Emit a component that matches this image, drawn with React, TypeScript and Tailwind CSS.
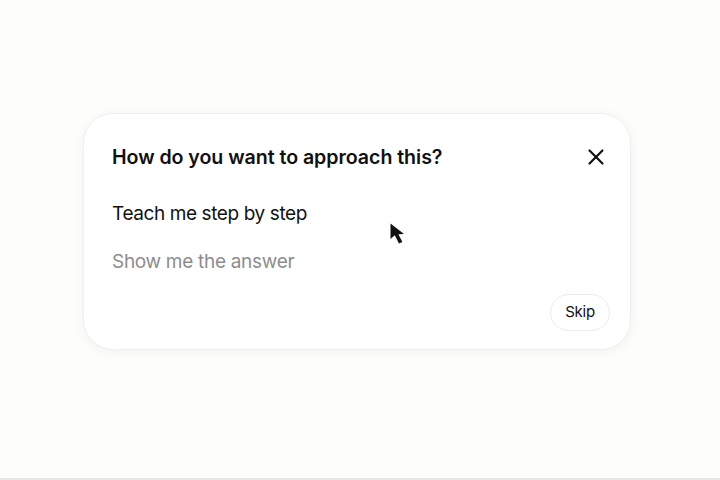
import React from "react";
import { X } from "lucide-react";

export default function App() {
  return (
    <div
      className="relative w-[720px] h-[480px] bg-[#fdfdfc] overflow-hidden border-b-2 border-[#e6e6e4]"
      style={{ fontFamily: "Inter, 'Liberation Sans', sans-serif" }}
    >
      <div className="pt-[113px] pl-[83px]">
        {/* Card */}
        <div className="w-[548px] h-[237px] bg-white rounded-[30px] border border-[#efefed] shadow-[0_2px_12px_rgba(0,0,0,0.05)] flex flex-col">
          <div className="flex items-center justify-between pl-[28px] pr-[21px] pt-[30px]">
            <h2 className="text-[19.6px] font-semibold text-[#111] tracking-[-0.05px] leading-[24px]">
              How do you want to approach this?
            </h2>
            <X className="w-[26px] h-[26px] text-[#111]" strokeWidth={2} />
          </div>

          <div className="flex flex-col pl-[28px] mt-[32px] gap-[24px]">
            <div className="text-[19px] text-[#111] leading-[24px] tracking-[-0.4px]">Teach me step by step</div>
            <div className="text-[19px] text-[#8d8d8d] leading-[24px] tracking-[-0.3px]">Show me the answer</div>
          </div>

          <div className="flex justify-end mt-auto pr-[20px] pb-[18px]">
            <button className="h-[37px] px-[14px] rounded-full border border-[#ececea] bg-white text-[15px] text-[#111] tracking-[-0.2px]">
              Skip
            </button>
          </div>
        </div>
      </div>

      {/* Mouse cursor */}
      <svg
        className="absolute left-[389px] top-[222px]"
        width="20"
        height="24"
        viewBox="0 0 20 24"
      >
        <path
          d="M1.5 1.5 L1.5 17 L5.8 13.2 L10 21.5 L13.4 19.9 L9.4 12.2 L15 12 Z"
          fill="#111"
          strokeLinejoin="round"
        />
      </svg>
    </div>
  );
}
